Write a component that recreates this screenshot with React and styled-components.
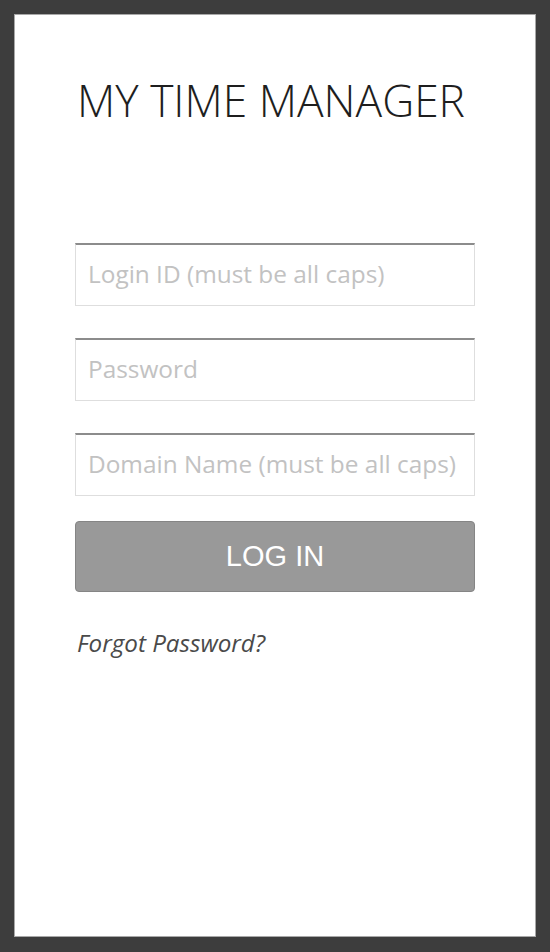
import React, { useState } from 'react';
import styled, { createGlobalStyle } from 'styled-components';

const GlobalStyle = createGlobalStyle`
  html, body {
    margin: 0;
    padding: 0;
    background: #3d3d3d;
  }
  * {
    box-sizing: border-box;
  }
`;

const Frame = styled.div`
  width: 550px;
  height: 952px;
  padding: 14px 14px 15px 14px;
  background: #3d3d3d;
`;

const Screen = styled.div`
  height: 100%;
  background: #ffffff;
  border: 1px solid #a8a8a8;
  padding: 0 60px;
  display: flex;
  flex-direction: column;
`;

const Title = styled.h1`
  margin: 55px 0 0 2px;
  font-family: "Open Sans", sans-serif;
  font-weight: 300;
  font-size: 44.3px;
  line-height: 60px;
  color: #1e1e1e;
`;

const Form = styled.form`
  margin-top: 113px;
  display: flex;
  flex-direction: column;
`;

const Field = styled.input`
  height: 63px;
  width: 400px;
  margin-bottom: ${(p) => p.gap}px;
  padding: 0 12px 4px;
  border: 1px solid #dedede;
  border-top: 2px solid #8c8c8c;
  font-family: "Open Sans", sans-serif;
  font-size: 24.4px;
  color: #333;
  background: #fff;
  outline: none;

  &::placeholder {
    color: #c2c2c2;
  }
`;

const Button = styled.button`
  height: 71px;
  width: 400px;
  border: 1px solid #858585;
  border-radius: 4px;
  background: #999999;
  color: #ffffff;
  font-family: "Liberation Sans", Arial, sans-serif;
  font-size: 29px;
  cursor: pointer;
`;

const Forgot = styled.a`
  margin: 34px 0 0 2px;
  font-family: "Open Sans", sans-serif;
  font-style: italic;
  font-size: 24.2px;
  color: #4a4a4a;
  text-decoration: none;
`;

const App = () => {
  const [login, setLogin] = useState('');
  const [password, setPassword] = useState('');
  const [domain, setDomain] = useState('');

  const handleSubmit = (e) => {
    e.preventDefault();
  };

  return (
    <>
      <GlobalStyle />
      <Frame>
        <Screen>
          <Title>MY TIME MANAGER</Title>
          <Form onSubmit={handleSubmit}>
            <Field gap={32} type='text' placeholder='Login ID (must be all caps)' value={login} onChange={(e) => setLogin(e.target.value)} />
            <Field gap={32} type='password' placeholder='Password' value={password} onChange={(e) => setPassword(e.target.value)} />
            <Field gap={25} type='text' placeholder='Domain Name (must be all caps)' value={domain} onChange={(e) => setDomain(e.target.value)} />
            <Button type='submit'>LOG IN</Button>
          </Form>
          <Forgot href='#'>Forgot Password?</Forgot>
        </Screen>
      </Frame>
    </>
  );
};

export default App;
